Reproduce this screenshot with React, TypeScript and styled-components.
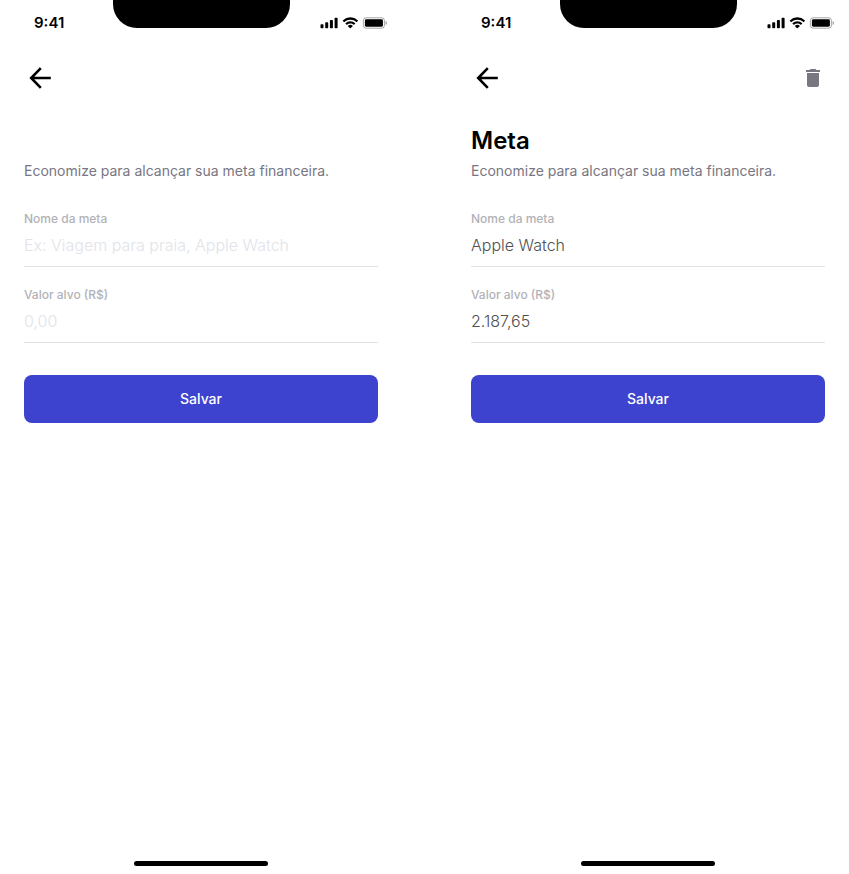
import React, { useId, useState } from "react";
import styled, { createGlobalStyle } from "styled-components";

const GlobalStyle = createGlobalStyle`
  *, *::before, *::after { box-sizing: border-box; }
  body {
    margin: 0;
    background: #ffffff;
    font-family: Inter, "Liberation Sans", sans-serif;
    color: #000000;
  }
`;

const Screens = styled.main`
  display: grid;
  grid-template-columns: 1fr 1fr;
  column-gap: 45px;
  min-height: 100vh;
`;

const Screen = styled.section`
  display: flex;
  flex-direction: column;
  min-width: 0;
`;

const StatusBar = styled.header`
  display: grid;
  grid-template-columns: 1fr auto 1fr;
  align-items: start;
  height: 44px;
`;

const Clock = styled.time`
  padding: 12px 0 0 34px;
  font-size: 15px;
  line-height: 22px;
  font-weight: 600;
`;

const Notch = styled.div`
  width: 177px;
  height: 28px;
  border-radius: 0 0 24px 24px;
  background: #000000;
`;

const StatusIcons = styled.div`
  display: flex;
  justify-content: flex-end;
  padding: 17px 15px 0 0;
`;

const NavBar = styled.nav`
  display: flex;
  justify-content: space-between;
  align-items: center;
  padding: 18px 20px 0 24px;
`;

const IconButton = styled.button`
  display: flex;
  align-items: center;
  justify-content: center;
  width: 32px;
  height: 32px;
  padding: 0;
  border: 0;
  background: none;
  color: #000000;
  cursor: pointer;
`;

const DeleteButton = styled(IconButton)`
  color: #787681;
`;

const Content = styled.div`
  flex: 1;
  padding: 31px 24px 0;
`;

const Title = styled.h1`
  min-height: 32px;
  margin: 0;
  font-size: 24px;
  line-height: 32px;
  font-weight: 600;
`;

const Subtitle = styled.p`
  margin: 4px 0 30px;
  font-size: 14px;
  line-height: 20px;
  color: #787681;
`;

const Form = styled.form`
  display: flex;
  flex-direction: column;
  gap: 20px;
`;

const FieldGroup = styled.div`
  display: flex;
  flex-direction: column;
  gap: 4px;
`;

const Label = styled.label`
  font-size: 12px;
  line-height: 16px;
  font-weight: 500;
  color: #b2b2b7;
`;

const TextInput = styled.input`
  width: 100%;
  height: 36px;
  padding: 0 0 8px;
  border: 0;
  border-bottom: 1px solid #e1e3e9;
  border-radius: 0;
  background: transparent;
  font-family: inherit;
  font-size: 16px;
  font-weight: 300;
  color: #505050;

  &::placeholder {
    color: #e1e3e9;
    opacity: 1;
  }
`;

const SaveButton = styled.button`
  height: 48px;
  margin-top: 12px;
  padding: 0 16px 2px;
  border: 0;
  border-radius: 8px;
  background: #3d43ce;
  color: #ffffff;
  font-family: inherit;
  font-size: 14px;
  font-weight: 500;
  cursor: pointer;
`;

const HomeIndicator = styled.div`
  align-self: center;
  width: 134px;
  height: 5px;
  margin: 24px 0 8px;
  border-radius: 3px;
  background: #000000;
`;

function DeviceIcons() {
  return (
    <svg width="67" height="12" viewBox="0 0 67 12" role="img" aria-label="Sinal, Wi-Fi e bateria">
      <rect x="0.5" y="7.3" width="3" height="4" rx="0.8" />
      <rect x="5.2" y="5.3" width="3" height="6" rx="0.8" />
      <rect x="9.9" y="3" width="3" height="8.3" rx="0.8" />
      <rect x="14.6" y="0.7" width="3" height="10.6" rx="0.8" />
      <g transform="translate(22.7 .4)">
        <path d="M7.67 2.28c2.22 0 4.36.86 5.98 2.38.12.12.31.12.43 0l1.16-1.18a.33.33 0 0 0 0-.46 10.87 10.87 0 0 0-15.14 0 .33.33 0 0 0 0 .46l1.16 1.18c.12.12.31.12.43 0A8.73 8.73 0 0 1 7.67 2.28Z" />
        <path d="M7.67 6.13c1.22 0 2.4.46 3.3 1.27.12.12.31.12.43 0l1.17-1.18a.33.33 0 0 0 0-.47 7.13 7.13 0 0 0-9.79 0 .33.33 0 0 0 0 .47l1.16 1.18c.12.12.32.12.44 0a4.9 4.9 0 0 1 3.29-1.27Z" />
        <path d="M10.01 8.73a.32.32 0 0 0-.01-.47 3.6 3.6 0 0 0-4.66 0 .32.32 0 0 0-.01.47l2.01 2.03c.06.06.14.1.23.1s.17-.04.23-.1l2.21-2.03Z" />
      </g>
      <rect x="43.4" y="0.8" width="21" height="10.4" rx="2.7" fill="none" stroke="#000" strokeOpacity="0.35" />
      <rect x="44.9" y="2.3" width="18" height="7.4" rx="1.4" />
      <path d="M65.6 4v4c.8-.35 1.3-1.13 1.3-2s-.5-1.65-1.3-2Z" fillOpacity="0.4" />
    </svg>
  );
}

function BackIcon() {
  return (
    <svg width="32" height="32" viewBox="0 0 32 32" fill="none" stroke="currentColor" strokeWidth="2.6" strokeLinejoin="miter" aria-hidden="true">
      <path d="M26.8 16H7.5M16.8 6.2 7.2 16l9.6 9.8" />
    </svg>
  );
}

function TrashIcon() {
  return (
    <svg width="24" height="24" viewBox="0 0 24 24" fill="currentColor" aria-hidden="true">
      <path d="M6 19c0 1.1.9 2 2 2h8c1.1 0 2-.9 2-2V7H6v12ZM19 4h-3.5l-1-1h-5l-1 1H5v2h14V4Z" />
    </svg>
  );
}

interface FieldProps {
  label: string;
  placeholder: string;
  initialValue?: string;
  numeric?: boolean;
}

function Field({ label, placeholder, initialValue = "", numeric }: FieldProps) {
  const id = useId();
  const [value, setValue] = useState(initialValue);
  return (
    <FieldGroup>
      <Label htmlFor={id}>{label}</Label>
      <TextInput
        id={id}
        type="text"
        inputMode={numeric ? "decimal" : "text"}
        placeholder={placeholder}
        value={value}
        onChange={(e) => setValue(e.target.value)}
      />
    </FieldGroup>
  );
}

interface GoalScreenProps {
  title?: string;
  name?: string;
  amount?: string;
  removable?: boolean;
}

function GoalScreen({ title, name, amount, removable }: GoalScreenProps) {
  return (
    <Screen>
      <StatusBar>
        <Clock>9:41</Clock>
        <Notch />
        <StatusIcons>
          <DeviceIcons />
        </StatusIcons>
      </StatusBar>
      <NavBar>
        <IconButton type="button" aria-label="Voltar">
          <BackIcon />
        </IconButton>
        {removable && (
          <DeleteButton type="button" aria-label="Excluir meta">
            <TrashIcon />
          </DeleteButton>
        )}
      </NavBar>
      <Content>
        <Title>{title}</Title>
        <Subtitle>Economize para alcançar sua meta financeira.</Subtitle>
        <Form onSubmit={(e) => e.preventDefault()}>
          <Field label="Nome da meta" placeholder="Ex: Viagem para praia, Apple Watch" initialValue={name} />
          <Field label="Valor alvo (R$)" placeholder="0,00" initialValue={amount} numeric />
          <SaveButton type="submit">Salvar</SaveButton>
        </Form>
      </Content>
      <HomeIndicator />
    </Screen>
  );
}

export default function App() {
  return (
    <>
      <GlobalStyle />
      <Screens>
        <GoalScreen />
        <GoalScreen title="Meta" name="Apple Watch" amount="2.187,65" removable />
      </Screens>
    </>
  );
}
